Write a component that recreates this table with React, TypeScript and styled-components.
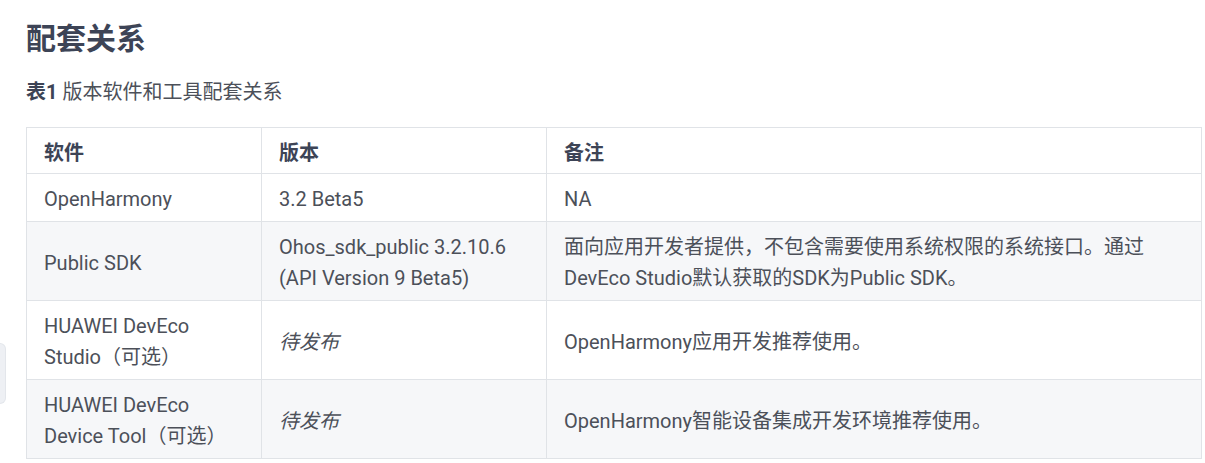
import React from "react";
import styled, { createGlobalStyle } from "styled-components";

const Global = createGlobalStyle`
  html, body { margin: 0; padding: 0; background: #ffffff; }
  body {
    font-family: Roboto, "Noto Sans CJK SC", sans-serif;
    color: #4c5059;
  }
`;

const Page = styled.div`
  position: relative;
  padding: 14px 4px 0 26px;
  width: 1205px;
  box-sizing: border-box;
`;

const Heading = styled.h2`
  margin: 0;
  font-family: "Noto Sans CJK SC", sans-serif;
  font-size: 30px;
  line-height: 44px;
  font-weight: 700;
  color: #3d4456;
`;

const Caption = styled.p`
  margin: 19px 0 20px;
  font-family: Roboto, "Noto Sans CJK SC", sans-serif;
  font-size: 20px;
  line-height: 30px;
  color: #4c5059;
  b { color: #3d4456; font-weight: 700; }
`;

const Table = styled.table`
  border-collapse: collapse;
  width: 1175px;
  table-layout: fixed;
  font-family: Roboto, "Noto Sans CJK SC", sans-serif;
  font-size: 20px;
  line-height: 31px;
`;

const Row = styled.tr<{ $alt?: boolean }>`
  background: ${(p) => (p.$alt ? "#f6f7f9" : "#ffffff")};
`;

const Th = styled.th`
  text-align: left;
  font-weight: 700;
  color: #3d4456;
  border: 1px solid #e0e3e7;
  padding: 8px 17px 6px;
  font-family: "Noto Sans CJK SC", sans-serif;
`;

const Td = styled.td<{ $italic?: boolean }>`
  border: 1px solid #e0e3e7;
  padding: 10px 17px 6px;
  vertical-align: middle;
  color: #4c5059;
  font-style: ${(p) => (p.$italic ? "italic" : "normal")};
`;

const SideTab = styled.div`
  position: absolute;
  left: 0;
  top: 343px;
  width: 5px;
  height: 59px;
  background: #eef0f4;
  border-radius: 0 6px 6px 0;
  border: 1px solid #e3e6eb;
  border-left: none;
`;

const rows: { a: React.ReactNode; b: React.ReactNode; c: React.ReactNode; italic?: boolean }[] = [
  { a: "OpenHarmony", b: "3.2 Beta5", c: "NA" },
  {
    a: "Public SDK",
    b: (
      <>
        Ohos_sdk_public 3.2.10.6
        <br />
        (API Version 9 Beta5)
      </>
    ),
    c: (
      <>
        面向应用开发者提供，不包含需要使用系统权限的系统接口。通过
        <br />
        DevEco Studio默认获取的SDK为Public SDK。
      </>
    ),
  },
  {
    a: (
      <>
        HUAWEI DevEco
        <br />
        Studio（可选）
      </>
    ),
    b: "待发布",
    c: "OpenHarmony应用开发推荐使用。",
    italic: true,
  },
  {
    a: (
      <>
        HUAWEI DevEco
        <br />
        Device Tool（可选）
      </>
    ),
    b: "待发布",
    c: "OpenHarmony智能设备集成开发环境推荐使用。",
    italic: true,
  },
];

export default function App() {
  return (
    <>
      <Global />
      <Page>
        <SideTab />
        <Heading>配套关系</Heading>
        <Caption>
          <b>表1</b> 版本软件和工具配套关系
        </Caption>
        <Table>
          <colgroup>
            <col style={{ width: 235 }} />
            <col style={{ width: 285 }} />
            <col style={{ width: 655 }} />
          </colgroup>
          <thead>
            <Row>
              <Th>软件</Th>
              <Th>版本</Th>
              <Th>备注</Th>
            </Row>
          </thead>
          <tbody>
            {rows.map((r, i) => (
              <Row key={i} $alt={i % 2 === 1}>
                <Td>{r.a}</Td>
                <Td $italic={r.italic}>{r.b}</Td>
                <Td>{r.c}</Td>
              </Row>
            ))}
          </tbody>
        </Table>
      </Page>
    </>
  );
}
